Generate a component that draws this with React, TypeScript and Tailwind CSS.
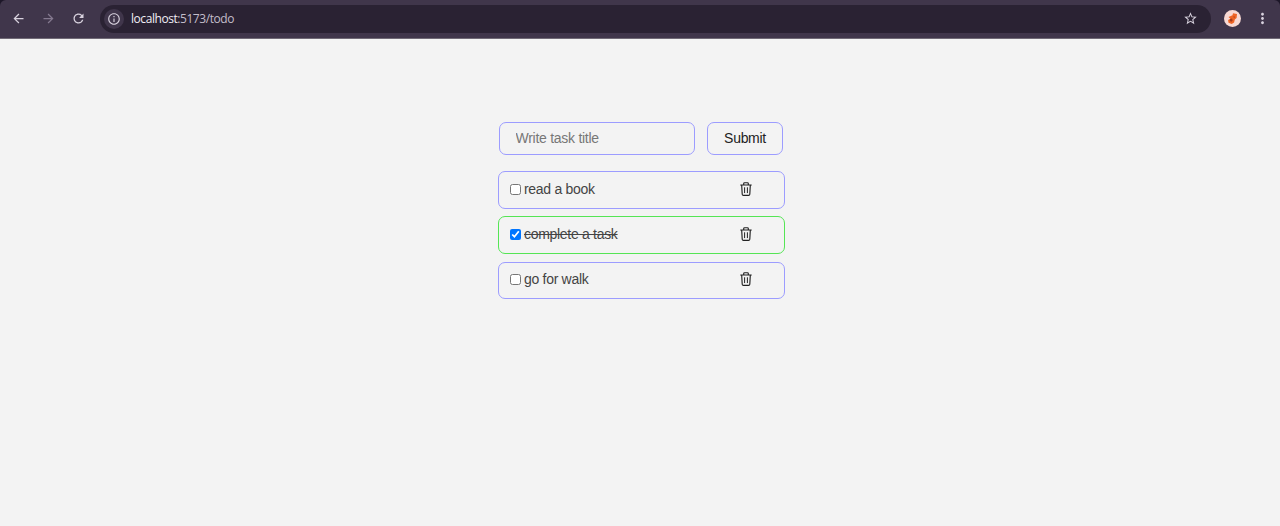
import { useState } from "react";
import { MdArrowBack, MdArrowForward, MdInfoOutline, MdMoreVert, MdRefresh, MdStarBorder } from "react-icons/md";

type Task = { id: number; title: string; done: boolean };

const initialTasks: Task[] = [
  { id: 1, title: "read a book", done: false },
  { id: 2, title: "complete a task", done: true },
  { id: 3, title: "go for walk", done: false },
];

function TrashIcon() {
  return (
    <svg
      viewBox="0 0 12 14"
      className="h-[14px] w-[12px]"
      fill="none"
      stroke="currentColor"
      strokeWidth="1.15"
      strokeLinecap="round"
      strokeLinejoin="round"
    >
      <path d="M.7 3h10.6M3.7 2.8V1.6q0-.9.9-.9h2.8q.9 0 .9.9v1.2M1.7 3.2l.5 9q.1 1.1 1.2 1.1h5.2q1.1 0 1.2-1.1l.5-9" />
      <path d="M4.6 5.7v5M7.4 5.7v5" strokeWidth="1" />
    </svg>
  );
}

function BrowserBar() {
  return (
    <header className="bg-[#1d1728]">
      <div className="flex h-[39px] items-center rounded-t-md border-b border-[#706a76] bg-[#40364b] pb-px text-[#d8d2de]">
        <MdArrowBack className="ml-[11px] size-[15px]" />
        <MdArrowForward className="ml-[15px] size-[15px] text-[#84798f]" />
        <MdRefresh className="ml-[15px] size-[15px]" />
        <div className="ml-[14px] flex h-[28px] w-[1111px] items-center rounded-full bg-[#2a2233] pr-[13px] pl-1">
          <span className="flex size-[20px] items-center justify-center rounded-full bg-[#40364b]">
            <MdInfoOutline className="size-[14px]" />
          </span>
          <span className="mt-px ml-[7px] font-['Open_Sans',sans-serif] text-[12px] leading-4 tracking-[-0.44px] text-[#c3bdca]">
            <span className="text-[#f1edf5]">localhost</span>:5173/todo
          </span>
          <MdStarBorder className="ml-auto size-[15px]" />
        </div>
        <span className="ml-[13px] flex size-[17px] items-center justify-center rounded-full bg-[#f8d9d3]">
          <svg viewBox="0 0 17 17" className="size-[17px]">
            <path d="M4.5 7 8.5 5.2 9 3.3 13 4l-.4 4-1.8 1.4-.7 3-2.4 1.6-3.2-1.2-.4-2.7 2.3-1.3z" fill="#ef6424" />
            <path d="m6 9 2-.4.7 2-1.3 1.2-1.6-.8zM9.5 6l1.6 1-1.2 1z" fill="#a53c1c" />
          </svg>
        </span>
        <MdMoreVert className="ml-[13px] size-[17px]" />
      </div>
    </header>
  );
}

export default function App() {
  const [tasks, setTasks] = useState(initialTasks);
  const [title, setTitle] = useState("");

  const toggle = (id: number) => setTasks(tasks.map((t) => (t.id === id ? { ...t, done: !t.done } : t)));

  return (
    <div className="min-h-[526px] bg-[#f3f3f3] font-['Liberation_Sans',Arial,sans-serif] text-[14px] tracking-[-0.3px] text-[#444]">
      <BrowserBar />
      <main className="ml-[498px] w-[287px] pt-[83px]">
        <form
          className="flex gap-3 pl-px"
          onSubmit={(e) => {
            e.preventDefault();
            if (!title.trim()) return;
            setTasks([...tasks, { id: Date.now(), title, done: false }]);
            setTitle("");
          }}
        >
          <input
            value={title}
            onChange={(e) => setTitle(e.target.value)}
            placeholder="Write task title"
            className="h-[33px] w-[196px] rounded-[7px] border border-[#9c9cff] px-[15.5px] pb-px tracking-[-0.27px] placeholder:text-[#777]"
          />
          <button className="h-[33px] w-[76px] rounded-[7px] border border-[#9c9cff] pb-px text-[#222]">Submit</button>
        </form>
        <ul className="mt-4 flex flex-col gap-[7.5px]">
          {tasks.map((task) => (
            <li
              key={task.id}
              className={`flex h-[37.8px] items-center rounded-[7px] border pr-[32px] pb-px pl-[11px] ${task.done ? "border-[#55e555]" : "border-[#9c9cff]"}`}
            >
              <input
                type="checkbox"
                checked={task.done}
                onChange={() => toggle(task.id)}
                className="size-[11px]"
              />
              <span className={`ml-[3px] ${task.done ? "line-through" : ""}`}>{task.title}</span>
              <button
                aria-label="Delete task"
                onClick={() => setTasks(tasks.filter((t) => t.id !== task.id))}
                className="mb-px ml-auto text-[#222]"
              >
                <TrashIcon />
              </button>
            </li>
          ))}
        </ul>
      </main>
    </div>
  );
}
